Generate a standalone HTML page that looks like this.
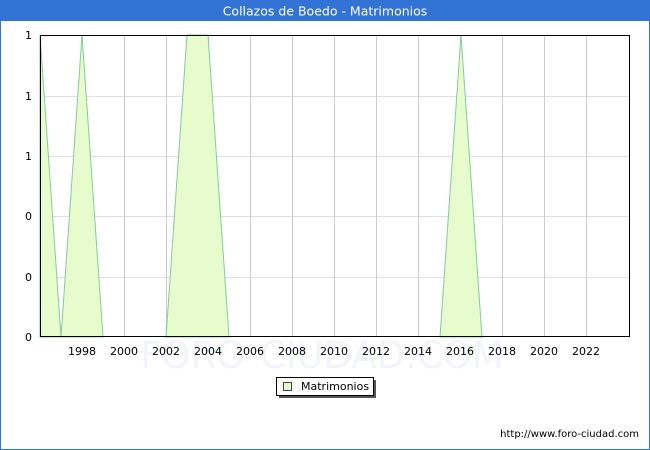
<!DOCTYPE html>
<html><head><meta charset="utf-8"><style>
html,body{margin:0;padding:0;background:#fff}
body{width:650px;height:450px;position:relative;overflow:hidden;font-family:"DejaVu Sans","Liberation Sans",sans-serif}
</style></head><body>
<svg width="650" height="450" xmlns="http://www.w3.org/2000/svg" style="position:absolute;left:0;top:0">
<rect x="0.5" y="0.5" width="649" height="449" fill="#fff" stroke="#3473d6"/>
<rect x="0" y="0" width="650" height="21" fill="#3473d6"/>
<text x="325" y="15.5" text-anchor="middle" font-size="12.5" fill="#fff" font-family="DejaVu Sans,sans-serif">Collazos de Boedo - Matrimonios</text>
<text x="322" y="368" text-anchor="middle" font-size="37" fill="#f3f4f9" font-family="DejaVu Sans,sans-serif">FORO-CIUDAD.COM</text>
<g stroke="#e0e0e0" stroke-width="1">
<line x1="40" y1="96.5" x2="630" y2="96.5"/><line x1="40" y1="156.5" x2="630" y2="156.5"/>
<line x1="40" y1="216.5" x2="630" y2="216.5"/><line x1="40" y1="277.5" x2="630" y2="277.5"/>
</g>
<g stroke="#cccccc" stroke-width="1">
<line x1="82.5" y1="35" x2="82.5" y2="337"/><line x1="124.5" y1="35" x2="124.5" y2="337"/>
<line x1="166.5" y1="35" x2="166.5" y2="337"/><line x1="208.5" y1="35" x2="208.5" y2="337"/>
<line x1="250.5" y1="35" x2="250.5" y2="337"/><line x1="292.5" y1="35" x2="292.5" y2="337"/>
<line x1="334.5" y1="35" x2="334.5" y2="337"/><line x1="376.5" y1="35" x2="376.5" y2="337"/>
<line x1="418.5" y1="35" x2="418.5" y2="337"/><line x1="460.5" y1="35" x2="460.5" y2="337"/>
<line x1="502.5" y1="35" x2="502.5" y2="337"/><line x1="544.5" y1="35" x2="544.5" y2="337"/>
<line x1="586.5" y1="35" x2="586.5" y2="337"/>
</g>
<g fill="#e6fccc" stroke="#88c8a0" stroke-width="1">
<polygon points="40,35 61,337 40,337"/>
<polygon points="61,337 82,35 103,337"/>
<polygon points="166,337 187,35 208,35 229,337"/>
<polygon points="440,337 461,35 482,337"/>
</g>
<rect x="40.5" y="35.5" width="589" height="301" fill="none" stroke="#000"/>
<g font-size="11" fill="#000" text-anchor="end">
<text x="32" y="39">1</text><text x="32" y="100">1</text><text x="32" y="160">1</text>
<text x="32" y="220">0</text><text x="32" y="281">0</text><text x="32" y="341">0</text>
</g>
<g font-size="11" fill="#000" text-anchor="middle">
<text x="82" y="355">1998</text><text x="124" y="355">2000</text><text x="166" y="355">2002</text>
<text x="208" y="355">2004</text><text x="250" y="355">2006</text><text x="292" y="355">2008</text>
<text x="334" y="355">2010</text><text x="376" y="355">2012</text><text x="418" y="355">2014</text>
<text x="460" y="355">2016</text><text x="502" y="355">2018</text><text x="544" y="355">2020</text>
<text x="586" y="355">2022</text>
</g>
<rect x="279" y="380" width="97" height="18" fill="#555"/>
<rect x="276.5" y="377.5" width="97" height="18" fill="#fff" stroke="#000"/>
<rect x="283.5" y="382.5" width="8" height="8" fill="#e6fccc" stroke="#444"/>
<text x="301" y="390" font-size="11" fill="#000">Matrimonios</text>
<text x="639" y="437" text-anchor="end" font-size="10" fill="#000">http://www.foro-ciudad.com</text>
</svg>
</body></html>
